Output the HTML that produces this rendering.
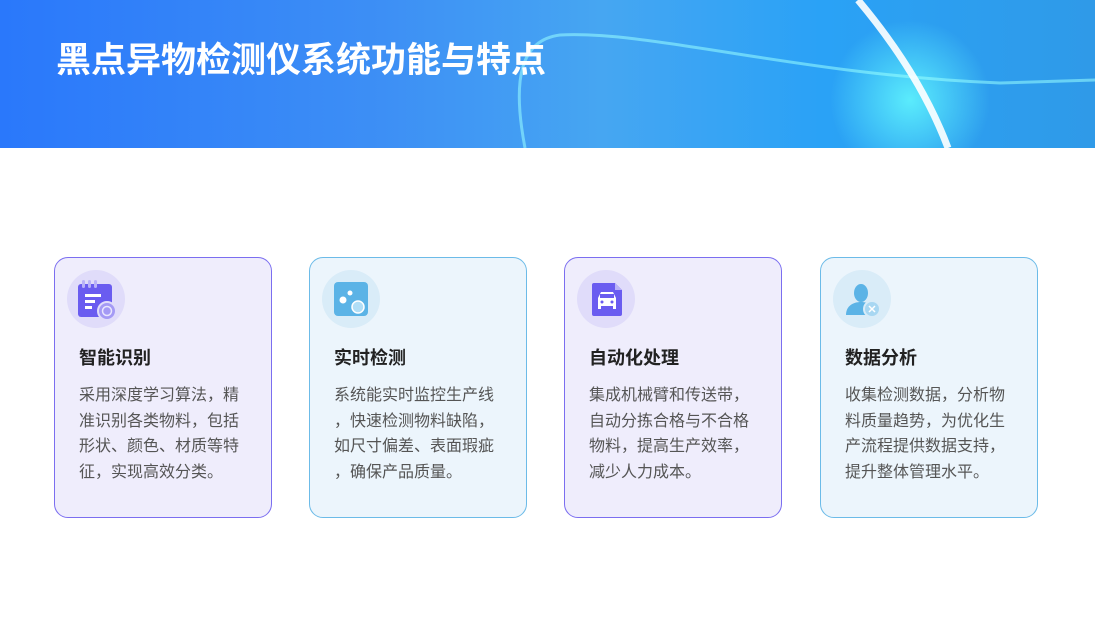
<!DOCTYPE html>
<html><head><meta charset="utf-8"><style>
body{margin:0;width:1095px;height:620px;background:#fff;position:relative;overflow:hidden;font-family:"Liberation Sans","Noto Sans CJK SC",sans-serif}
.hdr{position:absolute;left:0;top:0;width:1095px;height:148px;overflow:hidden;background:linear-gradient(90deg,#2a78fb 0%,#3d8ff5 35%,#46a6f2 55%,#2aa2f6 75%,#2f9ae8 100%)}
.hdr h1{position:absolute;left:56px;top:35px;margin:0;color:#fff;font-size:35px;line-height:46px;font-weight:bold;font-family:"Noto Sans CJK SC",sans-serif;white-space:nowrap}
.card{position:absolute;top:257px;width:216px;height:259px;border-radius:14px;border:1px solid}
.p{background:#efedfc;border-color:#7b6ef0}
.b{background:#ecf5fc;border-color:#6cbbe8}
.ic{position:absolute;left:12px;top:12px;width:58px;height:58px;border-radius:50%}
.p .ic{background:#e0dcfa}.b .ic{background:#d9ecf8}
.t{position:absolute;left:24px;top:86px;font-size:18px;font-weight:bold;color:#222;font-family:"Noto Sans CJK SC",sans-serif}
.d{position:absolute;left:24px;top:123px;width:190px;font-size:16px;line-height:25.5px;color:#555;font-family:"Noto Sans CJK SC",sans-serif;white-space:nowrap}
</style></head><body>
<div class="hdr">
<svg width="1095" height="148" style="position:absolute;left:0;top:0">
<defs><radialGradient id="g" cx="0.5" cy="0.5" r="0.5"><stop offset="0" stop-color="#6ff" stop-opacity=".8"/><stop offset="1" stop-color="#6ff" stop-opacity="0"/></radialGradient></defs>
<ellipse cx="910" cy="100" rx="80" ry="80" fill="url(#g)"/>
<path d="M525 148 C512 80 520 40 560 35 C650 30 800 75 1000 83 L1095 80" stroke="#9ff" stroke-opacity=".55" stroke-width="3" fill="none"/>
<path d="M858 0 C900 50 930 100 948 148" stroke="#fff" stroke-width="7" fill="none" stroke-opacity=".9"/>
</svg>
<h1>黑点异物检测仪系统功能与特点</h1></div>

<div class="card p" style="left:54px"><div class="ic"><svg width="58" height="58"><rect x="11" y="14" width="34" height="33" rx="3" fill="#6a5cf0"/><rect x="15" y="10" width="3" height="8" rx="1.5" fill="#b9b2f8"/><rect x="21" y="10" width="3" height="8" rx="1.5" fill="#b9b2f8"/><rect x="27" y="10" width="3" height="8" rx="1.5" fill="#b9b2f8"/><rect x="18" y="24" width="16" height="3" fill="#fff"/><rect x="18" y="30" width="10" height="3" fill="#fff"/><rect x="18" y="36" width="7" height="3" fill="#fff"/><circle cx="40" cy="41" r="9" fill="#a49af5" stroke="#e0dcfa" stroke-width="2"/><circle cx="40" cy="41" r="4.5" fill="none" stroke="#e9e6fd" stroke-width="1.5"/></svg></div><div class="t">智能识别</div><div class="d">采用深度学习算法，精<br>准识别各类物料，包括<br>形状、颜色、材质等特<br>征，实现高效分类。</div></div>

<div class="card b" style="left:309px"><div class="ic"><svg width="58" height="58"><rect x="12" y="12" width="34" height="34" rx="4" fill="#5bb3e6"/><circle cx="21" cy="30" r="3.5" fill="#fff"/><circle cx="28" cy="23" r="2.5" fill="#fff"/><circle cx="36" cy="37" r="6" fill="#b1def6" stroke="#fff" stroke-width="1.5"/></svg></div><div class="t">实时检测</div><div class="d">系统能实时监控生产线<br>，快速检测物料缺陷，<br>如尺寸偏差、表面瑕疵<br>，确保产品质量。</div></div>

<div class="card p" style="left:564px"><div class="ic"><svg width="58" height="58"><path d="M17 13 H38 L45 20 V44 a2 2 0 0 1-2 2 H17 a2 2 0 0 1-2-2 V15 a2 2 0 0 1 2-2z" fill="#6a5cf0"/><path d="M38 13 L45 20 H38z" fill="#b9b2f8"/><path d="M21 28 L24 22 H36 L39 28 V36 H21z" fill="#fff"/><rect x="23" y="24" width="14" height="4" fill="#6a5cf0"/><circle cx="25" cy="32" r="1.5" fill="#6a5cf0"/><circle cx="35" cy="32" r="1.5" fill="#6a5cf0"/><rect x="21" y="36" width="3" height="3" fill="#fff"/><rect x="36" y="36" width="3" height="3" fill="#fff"/></svg></div><div class="t">自动化处理</div><div class="d">集成机械臂和传送带，<br>自动分拣合格与不合格<br>物料，提高生产效率，<br>减少人力成本。</div></div>

<div class="card b" style="left:820px"><div class="ic"><svg width="58" height="58"><ellipse cx="28" cy="23" rx="7" ry="9" fill="#5bb3e6"/><path d="M13 45 C13 36 20 32 28 32 C36 32 42 36 42 45z" fill="#5bb3e6"/><circle cx="39" cy="39" r="8" fill="#a8d7f2" stroke="#d9ecf8" stroke-width="2"/><path d="M36 36 L42 42 M42 36 L36 42" stroke="#fff" stroke-width="1.5"/></svg></div><div class="t">数据分析</div><div class="d">收集检测数据，分析物<br>料质量趋势，为优化生<br>产流程提供数据支持，<br>提升整体管理水平。</div></div>
</body></html>
